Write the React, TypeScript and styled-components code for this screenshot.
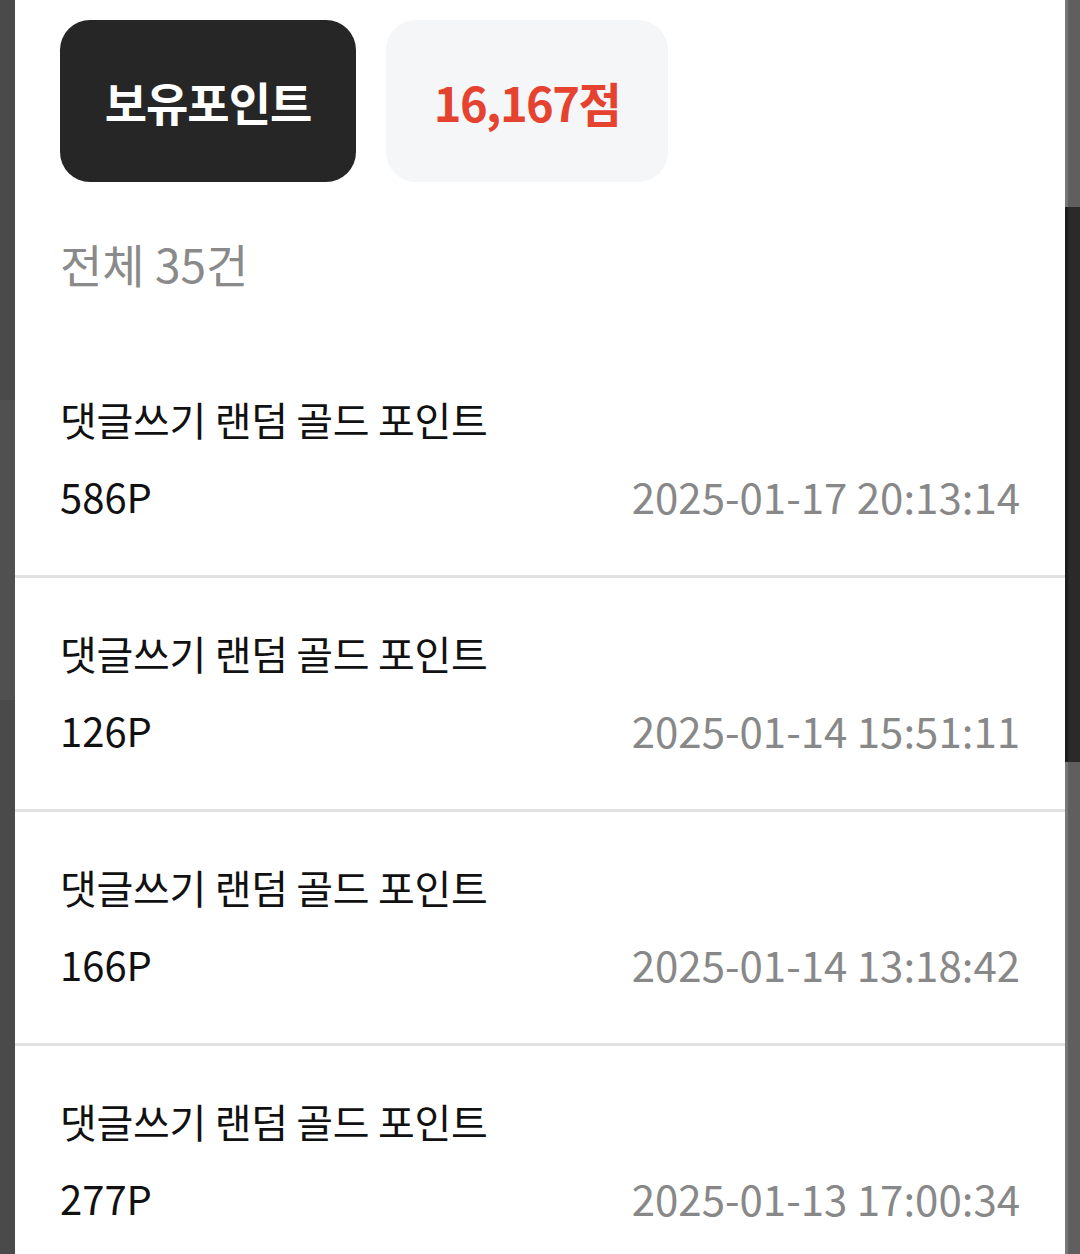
import React from "react";
import styled, { createGlobalStyle } from "styled-components";

type PointLog = {
  id: number;
  title: string;
  amount: number;
  date: string;
};

const logs: PointLog[] = [
  { id: 1, title: "댓글쓰기 랜덤 골드 포인트", amount: 586, date: "2025-01-17 20:13:14" },
  { id: 2, title: "댓글쓰기 랜덤 골드 포인트", amount: 126, date: "2025-01-14 15:51:11" },
  { id: 3, title: "댓글쓰기 랜덤 골드 포인트", amount: 166, date: "2025-01-14 13:18:42" },
  { id: 4, title: "댓글쓰기 랜덤 골드 포인트", amount: 277, date: "2025-01-13 17:00:34" },
];

const GlobalStyle = createGlobalStyle`
  html, body {
    margin: 0;
    padding: 0;
    background: #4b4b4b;
  }
  body {
    font-family: "Noto Sans CJK KR", "Noto Sans", sans-serif;
  }
`;

const Screen = styled.div`
  display: flex;
  flex-direction: row;
  height: 100vh;
  overflow: hidden;
`;

const LeftEdge = styled.div`
  width: 15px;
  flex-shrink: 0;
  display: flex;
  flex-direction: column;
  background: #4a4a4a;

  .shade {
    margin-top: 400px;
    height: 300px;
    background: #505050;
  }
`;

// 오른쪽 스크롤바 영역
const RightEdge = styled.div`
  width: 15px;
  flex-shrink: 0;
  display: flex;
  flex-direction: column;
  background: #5f5f5f;
  border-left: 3px solid #777;
  box-sizing: border-box;

  .thumb {
    margin-top: 207px;
    height: 555px;
    background: #2a2a2a;
    margin-left: -3px;
    border-left: 3px solid #1c1c1c;
  }
`;

const Panel = styled.div`
  flex: 1;
  background: #ffffff;
  display: flex;
  flex-direction: column;
`;

const Summary = styled.div`
  display: flex;
  flex-direction: row;
  gap: 30px;
  padding: 20px 45px 0;
`;

const SummaryBox = styled.div<{ $dark?: boolean }>`
  display: flex;
  align-items: center;
  justify-content: center;
  height: 162px;
  width: ${(p) => (p.$dark ? "296px" : "282px")};
  border-radius: 30px;
  background: ${(p) => (p.$dark ? "#262626" : "#f4f6f8")};
  color: ${(p) => (p.$dark ? "#ffffff" : "#e5432f")};
  font-size: ${(p) => (p.$dark ? "46px" : "47px")};
  font-weight: 700;
  letter-spacing: ${(p) => (p.$dark ? "-1px" : "-1.5px")};
`;

const Count = styled.div`
  padding: 50px 45px 50px;
  font-size: 46px;
  line-height: 62px;
  color: #8a8a8a;
`;

const List = styled.ul`
  list-style: none;
  margin: 0;
  padding: 0;
`;

const Item = styled.li`
  display: flex;
  flex-direction: column;
  padding: 50px 45px 51px;
  border-bottom: 3px solid #e2e2e2;
`;

const Title = styled.div`
  font-size: 40px;
  line-height: 50px;
  color: #111111;
  letter-spacing: -0.3px;
`;

const Meta = styled.div`
  display: flex;
  flex-direction: row;
  justify-content: space-between;
  align-items: center;
  margin-top: 24px;
  font-size: 40px;
  line-height: 56px;
`;

const Amount = styled.span`
  color: #111111;
`;

const DateText = styled.span`
  color: #888888;
  font-size: 42px;
`;

export default function App() {
  return (
    <>
      <GlobalStyle />
      <Screen>
        <LeftEdge>
          <div className="shade" />
        </LeftEdge>
        <Panel>
          <Summary>
            <SummaryBox $dark>보유포인트</SummaryBox>
            <SummaryBox>16,167점</SummaryBox>
          </Summary>
          <Count>전체 35건</Count>
          <List>
            {logs.map((log) => (
              <Item key={log.id}>
                <Title>{log.title}</Title>
                <Meta>
                  <Amount>{log.amount}P</Amount>
                  <DateText>{log.date}</DateText>
                </Meta>
              </Item>
            ))}
          </List>
        </Panel>
        <RightEdge>
          <div className="thumb" />
        </RightEdge>
      </Screen>
    </>
  );
}
